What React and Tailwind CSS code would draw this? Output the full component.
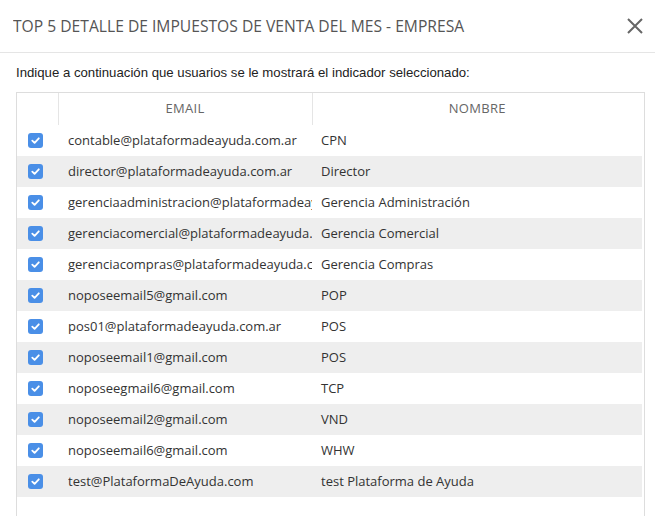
import React from 'react';

const users = [
  ['contable@plataformadeayuda.com.ar', 'CPN'],
  ['director@plataformadeayuda.com.ar', 'Director'],
  ['gerenciaadministracion@plataformadeayuda.com.ar', 'Gerencia Administración'],
  ['gerenciacomercial@plataformadeayuda.com.ar', 'Gerencia Comercial'],
  ['gerenciacompras@plataformadeayuda.com.ar', 'Gerencia Compras'],
  ['noposeemail5@gmail.com', 'POP'],
  ['pos01@plataformadeayuda.com.ar', 'POS'],
  ['noposeemail1@gmail.com', 'POS'],
  ['noposeegmail6@gmail.com', 'TCP'],
  ['noposeemail2@gmail.com', 'VND'],
  ['noposeemail6@gmail.com', 'WHW'],
  ['test@PlataformaDeAyuda.com', 'test Plataforma de Ayuda'],
];

function Check() {
  return (
    <span className="flex h-[15px] w-[15px] items-center justify-center rounded-[3px] bg-[#4a8fe7]">
      <svg width="11" height="11" viewBox="0 0 12 12" fill="none">
        <path d="M2.5 6.2 L5 8.6 L9.6 3.6" stroke="white" strokeWidth="2" strokeLinecap="round" strokeLinejoin="round" />
      </svg>
    </span>
  );
}

export default function App() {
  return (
    <div className="h-[516px] w-[655px] overflow-hidden bg-white">
      <div className="flex h-[53px] items-center justify-between border-b border-[#e5e5e5] pl-[13px] pr-[11px]">
        <h1 className="origin-left scale-x-[0.92] whitespace-nowrap font-stretch-[88%] text-[17px] text-[#555]" style={{ fontFamily: '"Open Sans", sans-serif' }}>
          TOP 5 DETALLE DE IMPUESTOS DE VENTA DEL MES - EMPRESA
        </h1>
        <svg width="18" height="18" viewBox="0 0 18 18" className="text-[#666]">
          <path d="M2 2 L16 16 M16 2 L2 16" stroke="currentColor" strokeWidth="2" />
        </svg>
      </div>

      <div className="pl-4 pr-[10px] pt-[10px]">
        <p className="text-[13.2px] text-[#222]" style={{ fontFamily: '"Liberation Sans", Arial, sans-serif' }}>
          Indique a continuación que usuarios se le mostrará el indicador seleccionado:
        </p>

        <div className="mt-[9px] h-[500px] border border-[#ddd] pr-[2px]" style={{ fontFamily: '"Open Sans", sans-serif' }}>
          <table className="w-full table-fixed border-collapse text-[13px] text-[#333]">
            <colgroup>
              <col className="w-[41px]" />
              <col className="w-[254px]" />
              <col />
            </colgroup>
            <thead>
              <tr className="h-[32px]">
                <th className="border-r border-[#e5e5e5]"></th>
                <th className="border-r border-[#e5e5e5] text-center text-[13px] font-normal tracking-[0.3px] text-[#666]">EMAIL</th>
                <th className="text-center text-[13px] font-normal tracking-[0.3px] text-[#666]">NOMBRE</th>
              </tr>
            </thead>
            <tbody>
              {users.map(([email, name], i) => (
                <tr key={i} className={`h-[31px] ${i % 2 === 1 ? 'bg-[#eeeeee]' : ''}`}>
                  <td className="pl-[11px]"><Check /></td>
                  <td className="pl-[10px]">
                    <div className="overflow-hidden whitespace-nowrap">{email}</div>
                  </td>
                  <td className="whitespace-nowrap pl-[9px]">{name}</td>
                </tr>
              ))}
            </tbody>
          </table>
        </div>
      </div>
    </div>
  );
}
